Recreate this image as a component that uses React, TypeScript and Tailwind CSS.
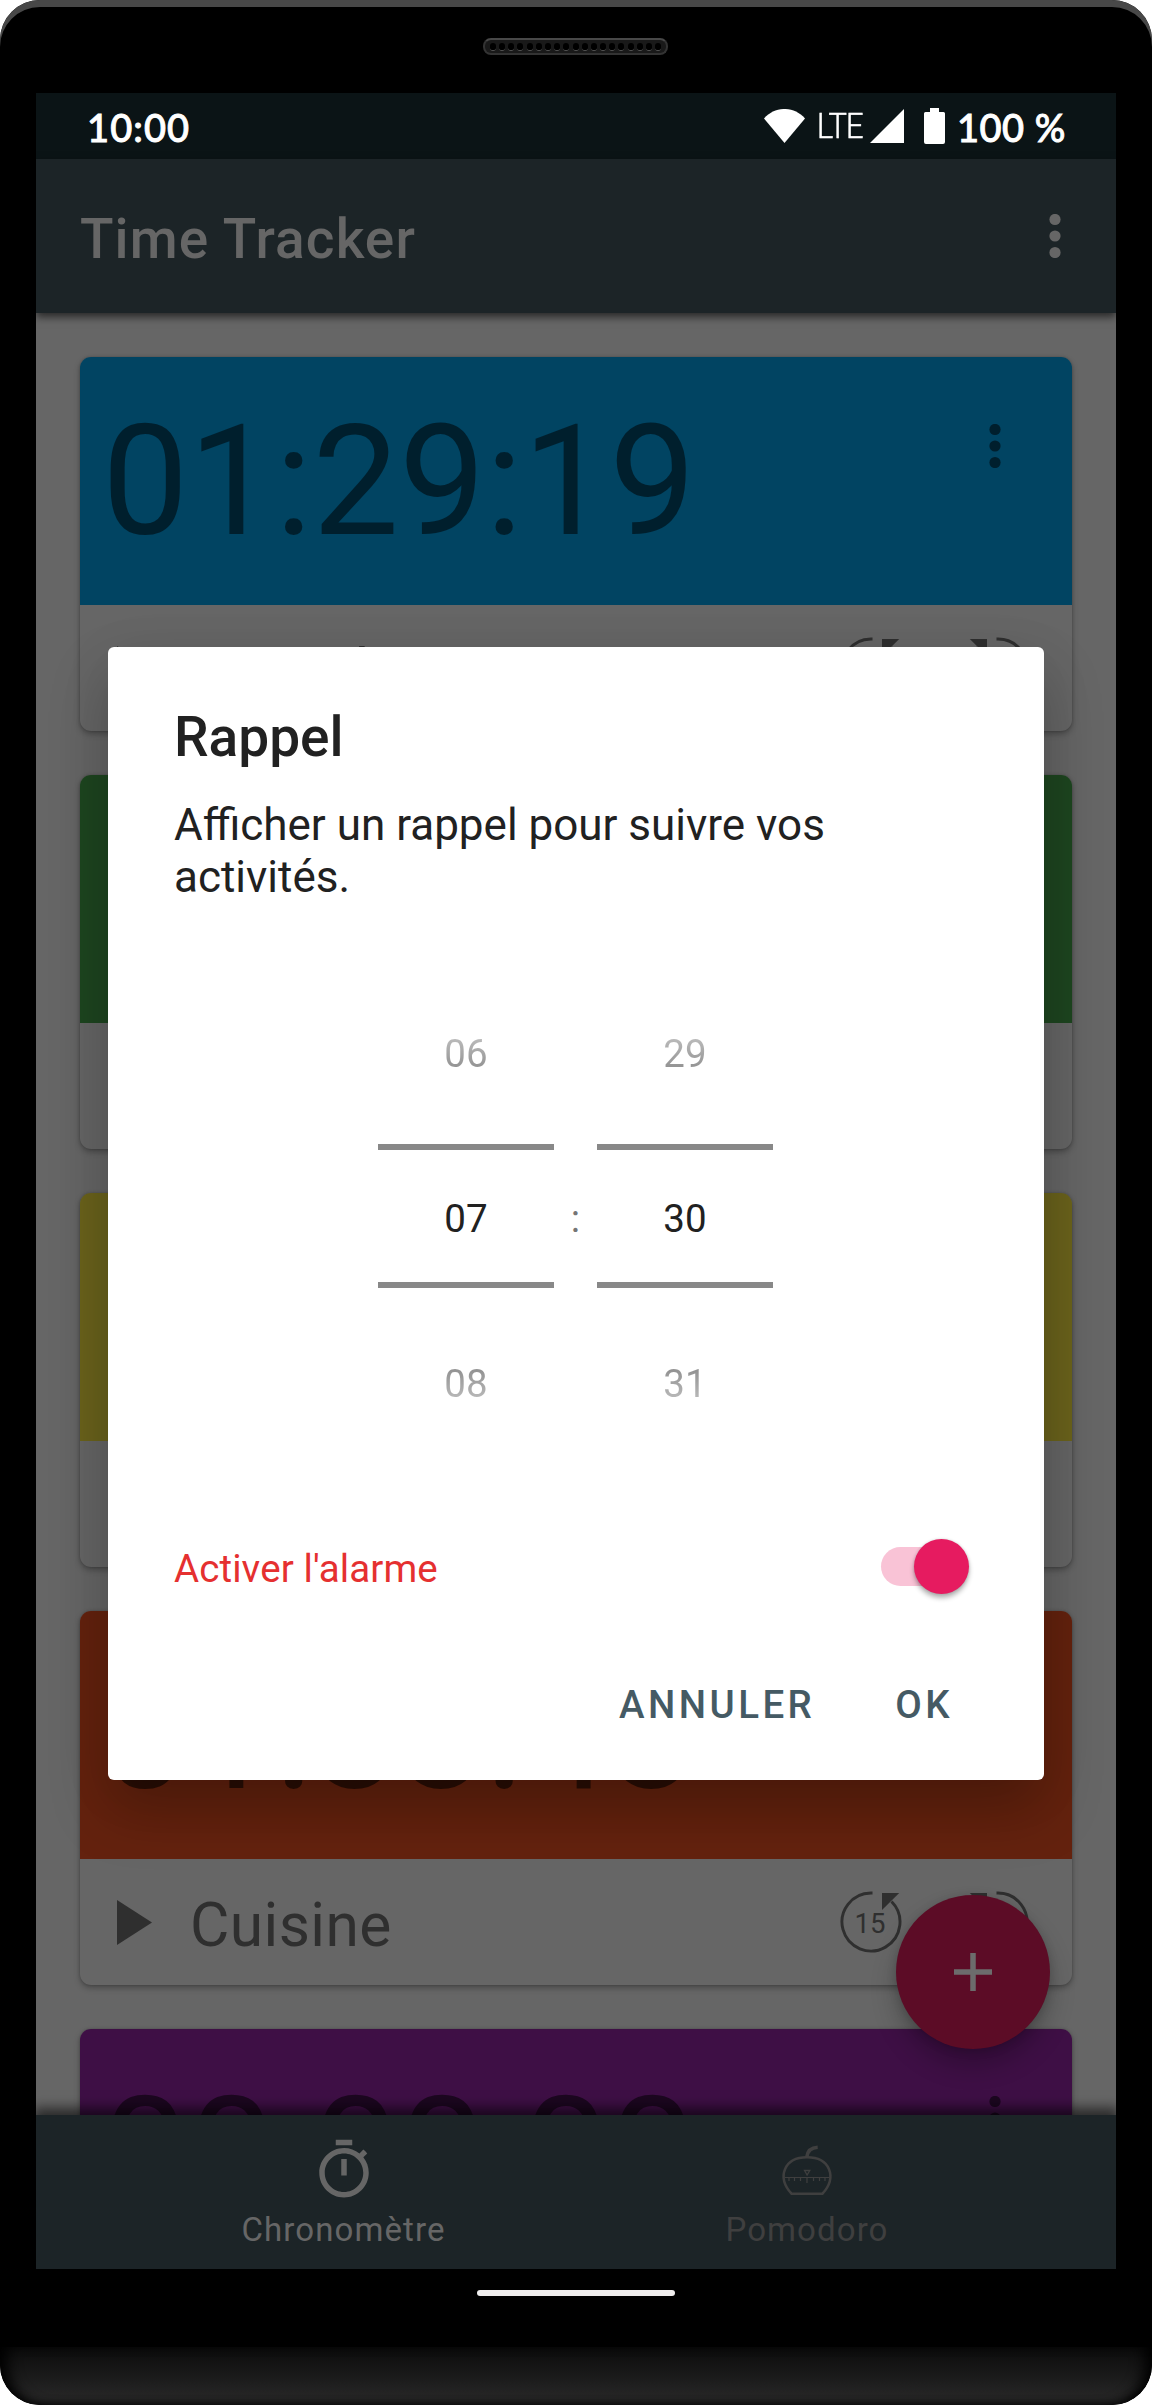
import React from 'react';

const SPEAKER_HOLES = Array.from({ length: 19 }, (_, i) => i);

function Dots({ className }: { className: string }) {
  return (
    <svg viewBox="0 0 12 44" className={`w-3 h-11 shrink-0 ${className}`} fill="currentColor">
      <circle cx="6" cy="5.5" r="5.6" />
      <circle cx="6" cy="22" r="5.6" />
      <circle cx="6" cy="38.5" r="5.6" />
    </svg>
  );
}

function Skip({ back }: { back?: boolean }) {
  return (
    <div className="relative size-[66px] shrink-0 flex items-center justify-center">
      <svg viewBox="0 0 66 66" className={`absolute inset-0 size-full ${back ? '' : '-scale-x-100'}`} fill="none">
        <path d="M34.5 4 H33 A29 29 0 1 0 53.5 12.5" stroke="#2f2f2f" strokeWidth="2.9" />
        <path d="M44 4 H61.2 L44 21 Z" fill="#2f2f2f" />
      </svg>
      <span className="text-[27.5px] leading-8 text-[#2f2f2f] mt-[3px] mr-0.5">15</span>
    </div>
  );
}

type Activity = { time: string; name: string; header: string };

const ACTIVITIES: Activity[] = [
  { time: '01:29:19', name: 'Travail', header: 'bg-[#014462] text-[#001f2d]' },
  { time: '00:45:10', name: 'Sport', header: 'bg-[#1e4620] text-[#0e200f]' },
  { time: '00:12:36', name: 'Lecture', header: 'bg-[#6b631c] text-[#312d0d]' },
  { time: '01:33:43', name: 'Cuisine', header: 'bg-[#64220e] text-[#2a0e05]' },
  { time: '00:00:00', name: 'Musique', header: 'bg-[#3e0f45] text-[#1c0720]' },
];

function Card({ activity }: { activity: Activity }) {
  return (
    <section className="h-[374px] shrink-0 flex flex-col rounded-[11px] bg-[#666] shadow-[0_3px_6px_rgba(0,0,0,0.28),0_0_3px_rgba(0,0,0,0.2)]">
      <div className={`h-[248px] rounded-t-[11px] flex justify-between pl-[22px] pr-[71px] ${activity.header}`}>
        <span className="text-[154px] leading-[180px] pt-[35px]">{activity.time}</span>
        <Dots className="mt-[67px]" />
      </div>
      <div className="h-[126px] flex items-center pl-[37px] pr-[41px] text-[#2f2f2f]">
        <svg viewBox="0 0 35 45" className="w-[35px] h-[45px]" fill="currentColor">
          <path d="M0 0 35 22.5 0 45Z" />
        </svg>
        <span className="text-[60.5px] leading-[72px] tracking-[0.4px] ml-[38px] mt-[7px] grow">{activity.name}</span>
        <Skip back />
        <div className="w-[61px]" />
        <Skip />
      </div>
    </section>
  );
}

function Picker({ values }: { values: [string, string, string] }) {
  return (
    <div className="w-44 flex flex-col items-center text-[38.5px] leading-[46px]">
      <span className="bg-linear-to-b from-[#b8b8b8] from-20% to-[#939393] to-80% bg-clip-text text-transparent">{values[0]}</span>
      <div className="mt-[67px] h-[144px] w-full border-y-[6px] border-[#888] flex items-center justify-center pt-[6px] text-[#212121]">
        <span>{values[1]}</span>
      </div>
      <span className="mt-[73px] bg-linear-to-b from-[#939393] from-20% to-[#b8b8b8] to-80% bg-clip-text text-transparent">{values[2]}</span>
    </div>
  );
}

function StatusBar() {
  return (
    <div className="h-[66px] shrink-0 bg-[#0b1416] text-white flex items-center pl-[51px] pr-[51px] font-[Lato] font-medium text-[38px] [-webkit-text-stroke:0.9px_white]">
      <span className="grow tracking-[1.1px] leading-[46px] pt-0.5">10:00</span>
      <svg viewBox="0 0 41 34" className="w-[41px] h-[34px]" fill="currentColor">
        <path d="M0 9.5C11-3.2 30-3.2 41 9.5L20.5 34Z" />
      </svg>
      <span className="ml-3 w-[53px] origin-left scale-x-[0.88] font-[Roboto] font-light text-[35px] tracking-[-0.8px] [-webkit-text-stroke:0.5px_white] pt-0.5">LTE</span>
      <svg viewBox="0 0 34 34" className="size-[34px]" fill="currentColor">
        <path d="M34 0V34H0Z" />
      </svg>
      <svg viewBox="0 0 21 36" className="ml-5 w-[21px] h-9" fill="currentColor">
        <path d="M6 0h9v4h4.5Q21 4 21 5.500V34Q21 36 19 36H2Q0 36 0 34V5.500Q0 4 1.500 4H6Z" />
      </svg>
      <span className="ml-3 w-[108px] leading-[46px] pt-0.5 tracking-[0.5px] whitespace-nowrap">100 %</span>
    </div>
  );
}

function Dialog() {
  return (
    <div className="absolute left-[72px] top-[554px] w-[936px] h-[1133px] rounded-[6px] bg-white px-[66px] flex flex-col text-[#212121] shadow-[0_30px_60px_rgba(0,0,0,0.24),0_10px_60px_rgba(0,0,0,0.06)]">
      <h2 className="mt-[58px] text-[55px] leading-[64px] font-medium">Rappel</h2>
      <p className="mt-[30px] text-[44px] leading-[52px] whitespace-nowrap">
        Afficher un rappel pour suivre vos
        <br />
        activités.
      </p>
      <div className="mt-[128px] pr-px flex items-center justify-center">
        <Picker values={['06', '07', '08']} />
        <span className="w-[43px] text-center text-[38.5px] leading-[46px] text-[#757575]">:</span>
        <Picker values={['29', '30', '31']} />
      </div>
      <div className="mt-[132px] h-[55px] flex items-center justify-between">
        <span className="text-[38.5px] leading-[46px] pt-[5px] tracking-[0.1px] text-[#e53030]">Activer l'alarme</span>
        <div className="mr-[9px] w-[88px] h-[55px] flex items-center justify-end relative">
          <div className="absolute left-0 w-[77px] h-[39px] rounded-full bg-[#f9c3d6]" />
          <div className="relative size-[55px] rounded-full bg-[#e61b60] shadow-[0_4px_5px_rgba(0,0,0,0.3),0_0_3px_rgba(0,0,0,0.15)]" />
        </div>
      </div>
      <div className="mt-[88px] flex justify-end pr-[25px] gap-[80px] text-[38.5px] leading-[46px] font-medium tracking-[3.44px] text-[#455a64]">
        <span>ANNULER</span>
        <span>OK</span>
      </div>
    </div>
  );
}

function BottomNav() {
  return (
    <nav className="h-[154px] shrink-0 relative bg-[#1c2427] shadow-[0_-4px_12px_3px_rgba(0,0,0,0.6)] flex justify-center text-[33px] leading-10 tracking-[1.1px]">
      <div className="w-[462px] pr-[3px] flex flex-col items-center text-[#666]">
        <svg viewBox="0 0 24 24" className="size-[66px] mt-[22px]" fill="currentColor">
          <path d="M15 1H9v2h6V1zm-4 13h2V8h-2v6zm8.030-6.610l1.420-1.420c-.43-.51-.9-.99-1.410-1.410l-1.420 1.420C16.070 4.740 14.120 4 12 4c-4.970 0-9 4.030-9 9s4.020 9 9 9 9-4.030 9-9c0-2.120-.74-4.070-1.970-5.610zM12 20c-3.870 0-7-3.130-7-7s3.130-7 7-7 7 3.130 7 7-3.130 7-7 7z" />
        </svg>
        <span className="mt-[7px]">Chronomètre</span>
      </div>
      <div className="w-[462px] flex flex-col items-center text-[#3f3f3f]">
        <svg viewBox="0 0 66 66" className="size-[66px] mt-[22px]" fill="none" stroke="currentColor">
          <path d="M17.500 56.700C2.500 40 10 20.200 33 20.200C56 20.200 63.500 40 48.500 56.700Z" strokeWidth="2.500" />
          <path d="M32.800 20C33.500 14 37 10.500 43.700 10.200" strokeWidth="3.600" />
          <path d="M11 40.500H55.500" strokeWidth="1.200" />
          <path d="M33 40V46M20.500 40V44M26.500 40V44M39.500 40V44M45.500 40V44M15 40V44M51 40V44" strokeWidth="1.200" />
          <path d="M30.500 33.500H35.800L33.100 38Z" strokeWidth="1.300" />
        </svg>
        <span className="mt-[7px]">Pomodoro</span>
      </div>
    </nav>
  );
}

export default function App() {
  return (
    <div className="w-[1152px] h-[2405px] bg-white overflow-hidden font-[Roboto,sans-serif]">
      <div className="relative w-full h-full rounded-[40px] bg-black overflow-hidden flex flex-col px-9 shadow-[inset_0_7px_0_#484848]">
        <div className="h-[93px] shrink-0 flex justify-center pr-px">
          <div className="mt-[38px] h-[17px] w-[185px] rounded-[8px] bg-[#191919] border-2 border-[#333] border-t-[#484848] flex items-center justify-center gap-[3.2px]">
            {SPEAKER_HOLES.map((i) => (
              <i key={i} className="block w-[6px] h-[8px] rounded-full bg-black border-b border-[#555]" />
            ))}
          </div>
        </div>
        <main className="relative h-[2176px] shrink-0 overflow-hidden bg-[#666] flex flex-col">
          <StatusBar />
          <header className="relative z-10 h-[154px] shrink-0 bg-[#1c2427] text-[#666] shadow-[0_4px_8px_rgba(0,0,0,0.6)] flex items-center justify-between pl-11 pr-[55px]">
            <h1 className="text-[55px] leading-[64px] font-medium tracking-[1.1px] mt-[5px]">Time Tracker</h1>
            <Dots className="" />
          </header>
          <div className="h-[1802px] shrink-0 overflow-hidden px-11 pt-11 flex flex-col gap-11">
            {ACTIVITIES.map((a) => (
              <Card key={a.name} activity={a} />
            ))}
          </div>
          <div className="absolute left-[860px] top-[1802px] size-[154px] rounded-full bg-[#5c0c26] shadow-[0_16px_26px_rgba(0,0,0,0.24),0_2px_10px_rgba(0,0,0,0.16)] flex items-center justify-center">
            <svg viewBox="0 0 38 38" className="size-[38px]" fill="none" stroke="#6c6c6c" strokeWidth="5.500">
              <path d="M19 0V38M0 19H38" />
            </svg>
          </div>
          <BottomNav />
          <Dialog />
        </main>
        <div className="h-[78px] shrink-0 flex justify-center pt-[21px]">
          <div className="w-[198px] h-[6px] rounded-[3px] bg-[#f0eeee]" />
        </div>
        <div className="-mx-9 h-[58px] rounded-b-[40px] bg-linear-to-b from-[#0c0c0c] to-[#2a2a2a] shadow-[inset_14px_0_14px_-6px_rgba(0,0,0,0.9),inset_-14px_0_14px_-6px_rgba(0,0,0,0.9),inset_0_-3px_6px_rgba(0,0,0,0.5)]" />
      </div>
    </div>
  );
}
